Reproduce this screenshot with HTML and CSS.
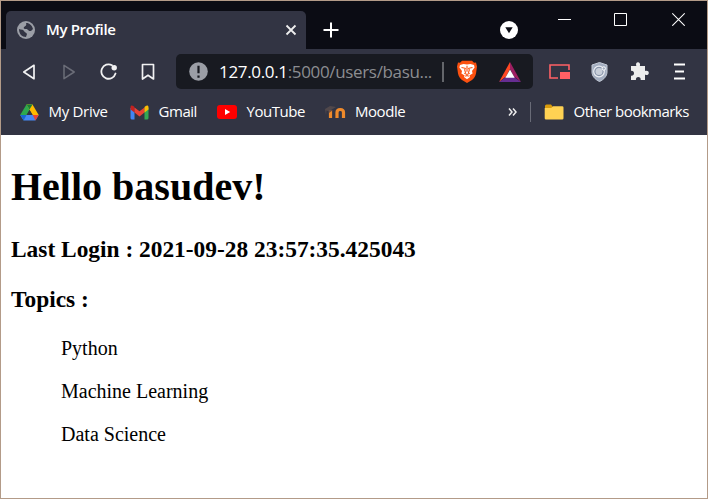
FILE: index.html
```html
<!DOCTYPE html>
<html lang="en">
<head>
<meta charset="utf-8">
<title>My Profile</title>
<link rel="stylesheet" href="styles.css">
</head>
<body>
<div class="window">
  <header class="titlebar">
    <div class="tab">
      <svg class="globe" width="18" height="18" viewBox="0 0 18 18"><circle cx="9" cy="9" r="9" fill="#9b9ea6"/><path d="M2 8c2 1 4 0 5 2s2 1 3 3l-1 3C5 16 2 13 2 8zM9 2c3-.4 6 2 7 6l-2 2c-2 .5-3-1-4-2-2 0-4 0-3-2 1-1 3-1 2-4z" fill="#323443"/></svg>
      <span class="tab-title">My Profile</span>
      <svg class="tab-close" width="12" height="12" viewBox="0 0 12 12"><path d="M1.500 1.500l9 9M10.500 1.500l-9 9" stroke="#eee" stroke-width="1.800"/></svg>
    </div>
    <svg class="new-tab" width="16" height="16" viewBox="0 0 16 16"><path d="M8 .5v15M.5 8h15" stroke="#fff" stroke-width="2"/></svg>
    <svg class="tab-search" width="18" height="18" viewBox="0 0 18 18"><circle cx="9" cy="9" r="9" fill="#fff"/><path d="M5.300 6.300h7.400L9 12.300z" fill="#0b0c14"/></svg>
    <div class="controls">
      <svg width="13" height="14" viewBox="0 0 13 14"><path d="M0 7.500h13" stroke="#fff"/></svg>
      <svg width="13" height="14" viewBox="0 0 13 14"><path d="M.5 1.500h12v12H.5z" fill="none" stroke="#fff"/></svg>
      <svg class="close" width="13" height="14" viewBox="0 0 13 14"><path d="M.3 1.300l12.400 12.400M12.700 1.300L.3 13.700" stroke="#fff" stroke-width="1.100"/></svg>
    </div>
  </header>

  <nav class="toolbar">
    <svg class="back" width="14" height="18" viewBox="0 0 14 18"><path d="M12 2.300v13.400L1.800 9z" fill="none" stroke="#f1f1f2" stroke-width="1.700" stroke-linejoin="round"/></svg>
    <svg class="forward" width="14" height="18" viewBox="0 0 14 18"><path d="M2 2.300v13.400L12.200 9z" fill="none" stroke="#6b6d78" stroke-width="1.500" stroke-linejoin="round"/></svg>
    <svg class="reload" width="18" height="18" viewBox="0 0 18 18"><path d="M12 2.200A7.200 7.200 0 1 0 15.500 10.500" fill="none" stroke="#f1f1f2" stroke-width="1.800" stroke-linecap="round"/><circle cx="14.200" cy="4.800" r="2.700" fill="#f1f1f2"/></svg>
    <svg class="bookmark" width="14" height="18" viewBox="0 0 14 18"><path d="M1.500 1.500h11v14.500L7 12.300 1.500 16z" fill="none" stroke="#f1f1f2" stroke-width="1.700" stroke-linejoin="round"/></svg>
    <div class="address">
      <svg class="info" width="19" height="19" viewBox="0 0 19 19"><circle cx="9.500" cy="9.500" r="9.300" fill="#9b9ea6"/><path d="M9.500 3.700v7.500M9.500 13.500v2.200" stroke="#181a21" stroke-width="2.200"/></svg>
      <span class="url"><b>127.0.0.1</b>:5000/users/basu...</span>
      <i class="address-rule"></i>
      <svg class="lion" width="20" height="23" viewBox="0 0 20 23"><path d="M5 .8h10l2 2 2-.3 1 4-1 7c-.6 3-2 5-4 6.500l-5 3-5-3c-2-1.500-3.400-3.500-4-6.500L0 6.500l1-4 2 .3z" fill="#fb5110"/><path d="M3 5l3.500-1 3.500.6L13.500 4 17 5l.6 2.600L15 11l.6 2.500-3.300 2L13 17l-3 2.200L7 17l.7-1.500-3.300-2L5 11 2.400 7.600z" fill="#fff"/><path d="M4.500 7.500l3.800.8-.6 1.600.9 3M15.500 7.500l-3.800.8.6 1.600-.9 3M10 5.800v6M7.300 13.300l2.700 1.200 2.700-1.200M8.200 16.300l1.800-.8 1.800.8" fill="none" stroke="#fb5110" stroke-width="1.100"/></svg>
      <svg class="bat" width="22" height="20" viewBox="0 0 22 20"><path d="M11 0v7l-4 7.500L0 20z" fill="#ff4724"/><path d="M11 0l11 20-7-5.500L11 7z" fill="#9e1f63"/><path d="M0 20l7-5h8l7 5z" fill="#662d91"/><path d="M11 7.500l4.700 8.200H6.300z" fill="#fff"/></svg>
    </div>
    <svg class="pip" width="21" height="16" viewBox="0 0 21 16"><path d="M20 6V1H1v13h8" fill="none" stroke="#ff6065" stroke-width="1.600"/><path d="M11 8h10v7H11z" fill="#ff6065"/></svg>
    <svg class="shield" width="17" height="20" viewBox="0 0 17 20"><path d="M8.500.5l7.500 2.500v7c0 4-3 7.500-7.500 9.500C4 17.500 1 14 1 10V3z" fill="#a3adc0" stroke="#c3cad6"/><circle cx="8" cy="9.500" r="5.300" fill="#8793a9" stroke="#eceef3" stroke-width="1.200"/><circle cx="8" cy="9.500" r="3.500" fill="#c9cfda"/><circle cx="12.800" cy="6.500" r="1.700" fill="#a3adc0" stroke="#fff"/></svg>
    <svg class="puzzle" width="19" height="19" viewBox="0 0 19 19"><path d="M1 4h5.300C5.500 1.500 6.500.3 8 .3s2.500 1.200 1.900 3.700H15v5c2.400-.6 3.800.3 3.800 1.900S17.400 13.300 15 12.800V18h-4.300c.2-2-.8-3-2.400-3s-2.600 1-2.400 3H1v-4.300c2 .2 3-.8 3-2.400S3 8.700 1 8.900z" fill="#ededed"/></svg>
    <svg class="menu" width="13" height="17" viewBox="0 0 13 17"><path d="M1 1.500h11M2 8.500h9M1 15.500h11" stroke="#fff" stroke-width="1.900"/></svg>
  </nav>

  <nav class="bookmarks">
    <span class="bm drive">
      <svg width="19" height="17" viewBox="0 0 19 17"><path d="M6.500.5h6L3.700 16.500.3 10.800z" fill="#2da94f"/><path d="M6.500.5h6l6.200 10.500h-6z" fill="#ffba00"/><path d="M6.500.5h6L9.500 5.500z" fill="#188038"/><path d="M.3 11h18.400l-3.300 5.500H3.700z" fill="#4688f4"/><path d="M.3 11h6.200l-2.800 5.500z" fill="#1967d2"/><path d="M12.700 11h6l-3.300 5.500z" fill="#ea4335"/><path d="M9.500 6l2.900 5H6.600z" fill="#323443"/></svg>
      <span>My Drive</span>
    </span>
    <span class="bm gmail">
      <svg width="19" height="15" viewBox="0 0 19 15"><path d="M.5 3h4v11.500H2q-1.500 0-1.500-1.500z" fill="#4285f4"/><path d="M14.500 3h4v10q0 1.500-1.500 1.500h-2.500z" fill="#34a853"/><path d="M4.500 2.500l5 3.800 5-3.800v5l-5 4-5-4z" fill="#ea4335"/><path d="M.5 4.500V2C.5.500 2 0 3.300 1l1.200 1v5.500z" fill="#c5221f"/><path d="M18.500 4.500V2C18.500.5 17 0 15.700 1l-1.200 1v5.500z" fill="#fbbc04"/></svg>
      <span>Gmail</span>
    </span>
    <span class="bm youtube">
      <svg width="20" height="14" viewBox="0 0 20 14"><rect width="20" height="14" rx="3" fill="#f00"/><path d="M8 4l5.200 3L8 10z" fill="#fff"/></svg>
      <span>YouTube</span>
    </span>
    <span class="bm moodle">
      <svg width="21" height="14" viewBox="0 0 21 14"><path d="M0 4l5-3 6 1-5 3v2L1.500 5.500 1 10z" fill="#51484b"/><path d="M5.500 6v7M12 13V7.500c0-4 6.500-4 6.500 0V13" fill="none" stroke="#ef8a2b" stroke-width="3.200"/><path d="M4 5h4l-4 3z" fill="#735040"/></svg>
      <span>Moodle</span>
    </span>
    <svg class="more" width="9" height="8" viewBox="0 0 9 8"><path d="M1 .5L4 4 1 7.500M5 .5L8 4 5 7.500" fill="none" stroke="#eee" stroke-width="1.500"/></svg>
    <i class="bookmark-rule"></i>
    <span class="bm other">
      <svg width="20" height="16" viewBox="0 0 20 16"><path d="M1 2q0-1.500 1.500-1.500H7L9 3v4H1z" fill="#d99b0b"/><path d="M.7 4h6.500l2-1.800h9q1.300 0 1.300 1.300v10.700q0 1.300-1.300 1.300H2q-1.300 0-1.300-1.300z" fill="#ffd253"/></svg>
      <span>Other bookmarks</span>
    </span>
  </nav>

  <main class="page">
    <h1>Hello basudev!</h1>
    <h3>Last Login : 2021-09-28 23:57:35.425043</h3>
    <h3>Topics :</h3>
    <ul>
      <li>Python</li>
      <li>Machine Learning</li>
      <li>Data Science</li>
    </ul>
  </main>
</div>
</body>
</html>
```
FILE: styles.css
```css
* { box-sizing: border-box; }
body { margin: 0; }
svg { display: block; flex: none; }

.window {
  width: 708px;
  height: 499px;
  overflow: hidden;
  border: 1px solid #b39b88;
  background: #fff;
  font-family: "Open Sans", "Noto Sans", sans-serif;
  color: #fff;
}

.titlebar {
  display: flex;
  height: 48px;
  padding-left: 5px;
  background: #0b0c14;
}
.tab {
  display: flex;
  align-items: center;
  width: 300px;
  height: 38px;
  margin-top: 10px;
  padding: 0 9px 0 11px;
  border-radius: 5px 5px 0 0;
  background: #323443;
}
.tab-title {
  margin: -2px 0 0 11px;
  font-size: 15px;
  font-weight: 600;
  letter-spacing: -0.35px;
  white-space: nowrap;
}
.tab-close { margin-left: auto; }
.new-tab { margin: 21px 0 0 17px; }
.tab-search { margin: 20px 0 0 161px; }
.controls {
  display: flex;
  gap: 43px;
  margin: 11px 0 0 40px;
}
.close { margin-left: 2px; }

.toolbar {
  display: flex;
  align-items: center;
  height: 45px;
  padding-left: 21px;
  background: #323443;
}
.forward { margin-left: 26px; }
.reload { margin-left: 24px; }
.bookmark { margin-left: 23px; }
.address {
  display: flex;
  align-items: center;
  width: 357px;
  height: 35px;
  margin-left: 21px;
  padding-left: 13px;
  border-radius: 5px;
  background: #181a21;
}
.url {
  width: 214px;
  margin-left: 11px;
  font-size: 17px;
  letter-spacing: -0.34px;
  white-space: nowrap;
  color: #8c8d91;
}
.url b { font-weight: 400; color: #fff; }
.address-rule {
  width: 2px;
  height: 20px;
  margin-left: 9px;
  background: #64666b;
}
.lion { margin-left: 13px; }
.bat { margin-left: 22px; }
.pip { margin-left: 16px; }
.shield { margin-left: 21px; }
.puzzle { margin-left: 22px; }
.menu { margin-left: 24px; }

.bookmarks {
  display: flex;
  align-items: center;
  height: 41px;
  padding: 0 0 5px 19px;
  background: #323443;
}
.bm {
  display: flex;
  align-items: center;
  gap: 9.5px;
  font-size: 15px;
  letter-spacing: -0.45px;
  white-space: nowrap;
}
.bm span { margin-top: -2px; }
.drive { width: 110px; letter-spacing: -0.3px; }
.gmail { width: 87px; }
.youtube { width: 108px; }
.moodle { width: 183px; gap: 9px; }
.other { letter-spacing: -0.52px; }
.bookmark-rule {
  width: 1px;
  height: 20px;
  margin: 0 13px;
  background: #696b77;
}

.page {
  display: flow-root;
  padding: 1px 10px 0;
  font: 20px "Liberation Serif", serif;
  color: #000;
}
h1 { margin: 26.8px 0 0; font-size: 40px; }
h3 { margin: 23.4px 0 0; font-size: 23.4px; }
h1 + h3 { margin-top: 25.8px; }
ul { margin: 24.4px 0 0; padding-left: 50px; list-style: none; }
li { margin-bottom: 20px; }
```
